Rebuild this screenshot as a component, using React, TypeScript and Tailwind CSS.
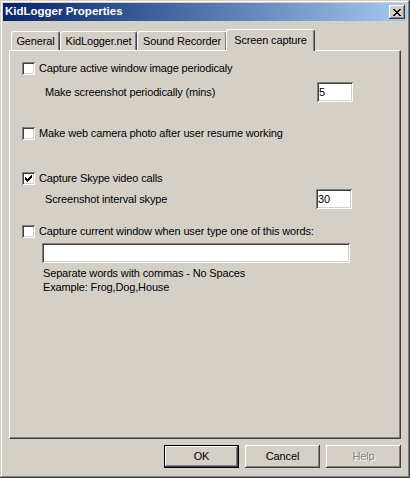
import { ReactNode } from 'react'

const raised =
  'shadow-[inset_-1px_-1px_#404040,inset_1px_1px_#ffffff,inset_-2px_-2px_#808080,inset_2px_2px_#d4d0c8]'
const sunken =
  'shadow-[inset_1px_1px_#808080,inset_-1px_-1px_#ffffff,inset_2px_2px_#404040,inset_-2px_-2px_#d4d0c8]'

function CheckBox({ checked = false }: { checked?: boolean }) {
  return (
    <div className={`w-[13px] h-[13px] bg-white shrink-0 flex items-center justify-center ${sunken}`}>
      {checked && (
        <svg width="7" height="7" viewBox="0 0 7 7" shapeRendering="crispEdges">
          <path d="M0 2h1v3h-1zM1 3h1v3h-1zM2 4h1v3h-1zM3 3h1v3h-1zM4 2h1v3h-1zM5 1h1v3h-1zM6 0h1v3h-1z" fill="#000" />
        </svg>
      )}
    </div>
  )
}

function CheckRow({ label, checked, className = '' }: { label: string; checked?: boolean; className?: string }) {
  return (
    <div className={`flex items-center h-[13px] gap-[4px] ${className}`}>
      <CheckBox checked={checked} />
      <span className="leading-[13px] whitespace-nowrap">{label}</span>
    </div>
  )
}

function Field({ value = '', className = '' }: { value?: string; className?: string }) {
  return (
    <div className={`h-[20px] bg-white ${sunken} flex items-center pl-[2px] ${className}`}>
      <span className="leading-none">{value}</span>
    </div>
  )
}

function Tab({ children, active, className = '' }: { children: ReactNode; active?: boolean; className?: string }) {
  return (
    <div
      className={`flex justify-center rounded-t-[3px] bg-[#d4d0c8] border-l border-t border-white shadow-[inset_-1px_0_#808080] border-r border-r-[#404040] ${
        active ? 'h-[22px] relative z-10 pt-[3px]' : 'h-[19px] mt-[2px] pt-[2px]'
      } ${className}`}
    >
      <span className="whitespace-nowrap leading-[14px]">{children}</span>
    </div>
  )
}

function Button({ children, isDefault, disabled }: { children: ReactNode; isDefault?: boolean; disabled?: boolean }) {
  return (
    <div
      className={`w-[75px] h-[23px] flex items-center justify-center ${
        isDefault ? 'border border-black' : ''
      }`}
    >
      <div className={`w-full h-full flex items-center justify-center ${raised}`}>
        <span
          className={
            disabled ? 'text-[#808080] [text-shadow:1px_1px_0_#ffffff]' : 'text-black'
          }
        >
          {children}
        </span>
      </div>
    </div>
  )
}

export default function App() {
  return (
    <div
      className={`w-[410px] h-[478px] bg-[#d4d0c8] p-[3px] text-[11px] tracking-[-0.15px] text-black font-['Liberation_Sans',Arial,sans-serif] shadow-[inset_-1px_-1px_#404040,inset_1px_1px_#d4d0c8,inset_-2px_-2px_#808080,inset_2px_2px_#ffffff] select-none`}
    >
      {/* Title bar */}
      <div className="h-[18px] flex items-center justify-between bg-gradient-to-r from-[#0a246a] to-[#a6caf0] pl-[2px] pr-[2px]">
        <span className="text-white font-bold text-[11.5px] tracking-normal leading-none">KidLogger Properties</span>
        <div className={`w-[16px] h-[14px] bg-[#d4d0c8] flex items-center justify-center ${raised}`}>
          <svg width="8" height="7" viewBox="0 0 8 7" shapeRendering="crispEdges">
            <path
              d="M0 0h2v1h-2zM6 0h2v1h-2zM1 1h2v1h-2zM5 1h2v1h-2zM2 2h4v1h-4zM3 3h2v1h-2zM2 4h4v1h-4zM1 5h2v1h-2zM5 5h2v1h-2zM0 6h2v1h-2zM6 6h2v1h-2z"
              fill="#000"
            />
          </svg>
        </div>
      </div>

      {/* Tabs */}
      <div className="flex mt-[8px] h-[21px] pl-[8px]">
        <Tab className="w-[49px]">General</Tab>
        <Tab className="w-[77px]">KidLogger.net</Tab>
        <Tab className="w-[90px]">Sound Recorder</Tab>
        <Tab active className="w-[89px] -ml-[1px]">
          Screen capture
        </Tab>
      </div>

      {/* Panel */}
      <div className="mx-[6px] h-[389px] border-t border-l border-white border-r border-b border-r-[#404040] border-b-[#404040] shadow-[inset_-1px_-1px_#808080] pl-[12px]">
        <CheckRow className="mt-[11px]" label="Capture active window image periodicaly" />

        <div className="flex items-center h-[20px] mt-[7px]">
          <span className="ml-[23px] flex-1 whitespace-nowrap">Make screenshot periodically (mins)</span>
          <Field value="5" className="w-[36px] mr-[47px]" />
        </div>

        <CheckRow className="mt-[25px]" label="Make web camera photo after user resume working" />

        <CheckRow className="mt-[32px]" label="Capture Skype video calls" checked />

        <div className="flex items-center h-[20px] mt-[4px]">
          <span className="ml-[23px] flex-1 whitespace-nowrap">Screenshot interval skype</span>
          <Field value="30" className="w-[36px] mr-[48px]" />
        </div>

        <CheckRow className="mt-[16px]" label="Capture current window when user type one of this words:" />

        <Field className="w-[308px] ml-[20px] mt-[5px]" />

        <div className="ml-[21px] mt-[3px] leading-[14px]">
          <div>Separate words with commas - No Spaces</div>
          <div>Example: Frog,Dog,House</div>
        </div>
      </div>

      {/* Buttons */}
      <div className="flex justify-end gap-[6px] mt-[6px] pr-[6px]">
        <Button isDefault>OK</Button>
        <Button>Cancel</Button>
        <Button disabled>Help</Button>
      </div>
    </div>
  )
}
